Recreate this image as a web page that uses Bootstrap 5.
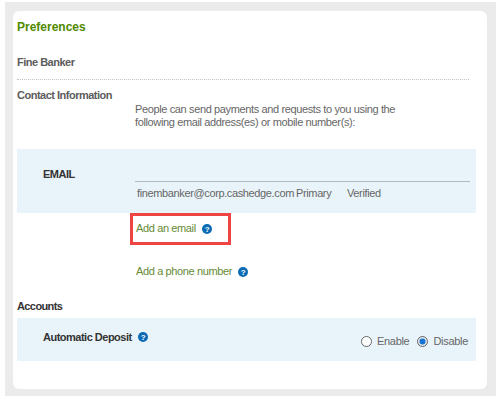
<!DOCTYPE html>
<html lang="en">
<head>
<meta charset="utf-8">
<title>Preferences</title>
<link href="https://cdn.jsdelivr.net/npm/bootstrap@5.3.0/dist/css/bootstrap.min.css" rel="stylesheet">
<style>
html,body{height:400px;overflow:hidden;background:#fff;}
body{font-family:"Liberation Sans",Arial,sans-serif;font-size:11px;line-height:13px;letter-spacing:-.37px;color:#666;}
.shell{margin:2px 4px 0 5px;height:394px;background:#ebebeb;padding:9px 9px 7px 8px;}
.sheet{height:378px;background:#fff;border-radius:6px;padding:0 11px 0 4px;position:relative;}
.ttl{font-size:12px;font-weight:700;letter-spacing:0;color:#4f8a00;padding-top:10px;height:37px;}
.who{font-weight:700;color:#5c5c5c;height:32px;padding-top:8px;margin-right:7px;border-bottom:1px dotted #c4c4c4;letter-spacing:-.5px;}
.sec{font-weight:700;color:#5c5c5c;padding-top:9px;height:26px;letter-spacing:-.5px;}
.intro{padding-left:118px;height:46px;margin-top:-3px;}
.band{background:#e9f4fa;}
.band-mail{height:64px;}
.lbl-col{width:118px;padding-left:26px;padding-top:19px;font-weight:700;color:#333;letter-spacing:-.5px;}
.rule-col{width:335px;padding-top:32px;}
.rule-top{border-top:1px solid #b4b8b8;padding:5px 0 0 2px;}
.cell-a{width:159px;}
.cell-b{width:51px;}
.add-row{padding-left:119px;height:42px;padding-top:9px;}
.add-row + .add-row{padding-top:10px;}
.add-link{color:#668a35;text-decoration:none;}
.tip{width:10px;height:10px;vertical-align:-2px;margin-left:6px;}
.auto .tip{vertical-align:-1px;}
.callout{position:absolute;left:117px;top:202px;width:101px;height:32px;border:3px solid #ee4444;}
.sec2{font-weight:700;color:#333;height:21px;padding-top:3px;letter-spacing:-.6px;}
.band-acct{height:43px;padding:13px 8px 0 26px;}
.auto{font-weight:700;color:#333;letter-spacing:-.5px;}
.opts{padding-top:4px;letter-spacing:-.3px;}
.opt{width:11px;height:11px;margin-right:5px;vertical-align:-2px;}
</style>
</head>
<body>
<div class="shell">
  <div class="sheet">
    <div class="ttl">Preferences</div>
    <div class="who">Fine Banker</div>
    <div class="sec">Contact Information</div>
    <div class="intro">People can send payments and requests to you using the<br>following email address(es) or mobile number(s):</div>
    <div class="band band-mail d-flex">
      <div class="lbl-col">EMAIL</div>
      <div class="rule-col">
        <div class="rule-top d-flex"><span class="cell-a">finembanker@corp.cashedge.com</span><span class="cell-b">Primary</span><span>Verified</span></div>
      </div>
    </div>
    <div class="add-row"><a class="add-link" href="#">Add an email</a><svg class="tip" viewBox="0 0 10 10"><circle cx="5" cy="5" r="5" fill="#0b6bb5"/><text x="5" y="8" text-anchor="middle" font-size="8" font-weight="700" fill="#fff" font-family="Liberation Sans">?</text></svg></div>
    <div class="add-row"><a class="add-link" href="#">Add a phone number</a><svg class="tip" viewBox="0 0 10 10"><circle cx="5" cy="5" r="5" fill="#0b6bb5"/><text x="5" y="8" text-anchor="middle" font-size="8" font-weight="700" fill="#fff" font-family="Liberation Sans">?</text></svg></div>
    <div class="sec2">Accounts</div>
    <div class="band band-acct d-flex justify-content-between">
      <div class="auto">Automatic Deposit<svg class="tip" viewBox="0 0 10 10"><circle cx="5" cy="5" r="5" fill="#0b6bb5"/><text x="5" y="8" text-anchor="middle" font-size="8" font-weight="700" fill="#fff" font-family="Liberation Sans">?</text></svg></div>
      <div class="d-flex align-items-center align-self-start opts gap-2">
        <span><svg class="opt" viewBox="0 0 11 11"><circle cx="5.5" cy="5.5" r="5" fill="#fff" stroke="#666"/></svg>Enable</span>
        <span><svg class="opt" viewBox="0 0 11 11"><circle cx="5.5" cy="5.5" r="5" fill="#dfe6ec" stroke="#666"/><circle cx="5.5" cy="5.5" r="3" fill="#1673d1"/></svg>Disable</span>
      </div>
    </div>
    <div class="callout"></div>
  </div>
</div>
</body>
</html>
